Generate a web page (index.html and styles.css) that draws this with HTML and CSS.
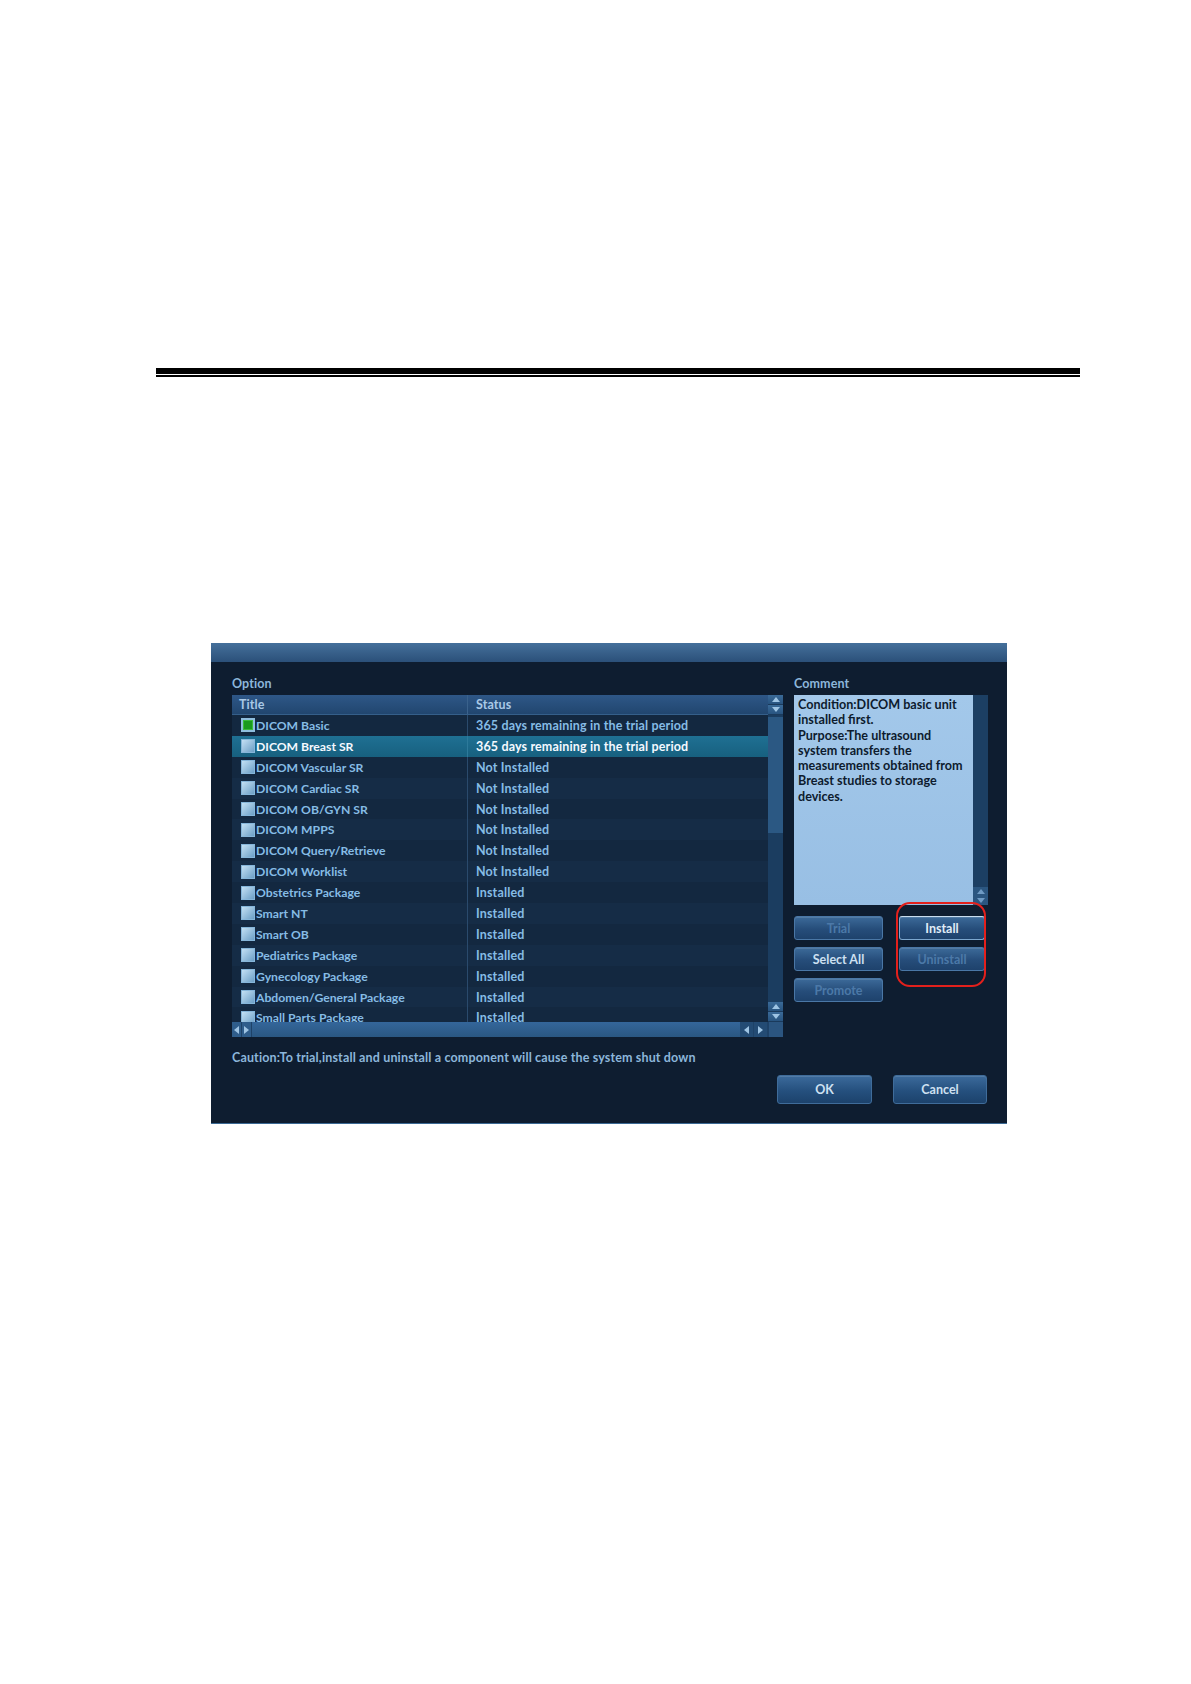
FILE: index.html
```html
<!DOCTYPE html>
<html>
<head>
<meta charset="utf-8">
<link rel="stylesheet" href="styles.css">
</head>
<body>
<div class="page">
  <div class="rule"><div class="rule-thick"></div><div class="rule-thin"></div></div>
  <div class="dialog">
    <div class="titlebar"></div>
    <div class="dlg-body">
      <div class="main">
        <div class="left">
          <div class="label">Option</div>
          <div class="table">
            <div class="table-main">
              <div class="grid">
                <div class="thead"><div class="c1">Title</div><div class="c2">Status</div></div>
                <div class="rows">
                  <div class="row"><div class="c1"><span class="cb cb-on"></span>DICOM Basic</div><div class="c2">365 days remaining in the trial period</div></div>
                  <div class="row sel"><div class="c1"><span class="cb"></span>DICOM Breast SR</div><div class="c2">365 days remaining in the trial period</div></div>
                  <div class="row"><div class="c1"><span class="cb"></span>DICOM Vascular SR</div><div class="c2">Not Installed</div></div>
                  <div class="row"><div class="c1"><span class="cb"></span>DICOM Cardiac SR</div><div class="c2">Not Installed</div></div>
                  <div class="row"><div class="c1"><span class="cb"></span>DICOM OB/GYN SR</div><div class="c2">Not Installed</div></div>
                  <div class="row"><div class="c1"><span class="cb"></span>DICOM MPPS</div><div class="c2">Not Installed</div></div>
                  <div class="row"><div class="c1"><span class="cb"></span>DICOM Query/Retrieve</div><div class="c2">Not Installed</div></div>
                  <div class="row"><div class="c1"><span class="cb"></span>DICOM Worklist</div><div class="c2">Not Installed</div></div>
                  <div class="row"><div class="c1"><span class="cb"></span>Obstetrics Package</div><div class="c2">Installed</div></div>
                  <div class="row"><div class="c1"><span class="cb"></span>Smart NT</div><div class="c2">Installed</div></div>
                  <div class="row"><div class="c1"><span class="cb"></span>Smart OB</div><div class="c2">Installed</div></div>
                  <div class="row"><div class="c1"><span class="cb"></span>Pediatrics Package</div><div class="c2">Installed</div></div>
                  <div class="row"><div class="c1"><span class="cb"></span>Gynecology Package</div><div class="c2">Installed</div></div>
                  <div class="row"><div class="c1"><span class="cb"></span>Abdomen/General Package</div><div class="c2">Installed</div></div>
                  <div class="row"><div class="c1"><span class="cb"></span>Small Parts Package</div><div class="c2">Installed</div></div>
                </div>
              </div>
              <div class="vscroll">
                <div class="arr"><svg width="8" height="5" viewBox="0 0 8 5"><polygon points="4,0 8,5 0,5" fill="#9ec4e4"/></svg></div>
                <div class="arr"><svg width="8" height="5" viewBox="0 0 8 5"><polygon points="0,0 8,0 4,5" fill="#9ec4e4"/></svg></div>
                <div class="vtrack"><div class="vthumb"></div></div>
                <div class="arr"><svg width="8" height="5" viewBox="0 0 8 5"><polygon points="4,0 8,5 0,5" fill="#9ec4e4"/></svg></div>
                <div class="arr"><svg width="8" height="5" viewBox="0 0 8 5"><polygon points="0,0 8,0 4,5" fill="#9ec4e4"/></svg></div>
              </div>
            </div>
            <div class="hscroll">
              <div class="harr"><svg width="5" height="8" viewBox="0 0 5 8"><polygon points="0,4 5,0 5,8" fill="#9ec4e4"/></svg></div>
              <div class="harr"><svg width="5" height="8" viewBox="0 0 5 8"><polygon points="0,0 5,4 0,8" fill="#9ec4e4"/></svg></div>
              <div class="hthumb"></div>
              <div class="harr dark"><svg width="5" height="8" viewBox="0 0 5 8"><polygon points="0,4 5,0 5,8" fill="#9ec4e4"/></svg></div>
              <div class="harr dark"><svg width="5" height="8" viewBox="0 0 5 8"><polygon points="0,0 5,4 0,8" fill="#9ec4e4"/></svg></div>
              <div class="corner"></div>
            </div>
          </div>
        </div>
        <div class="right">
          <div class="label">Comment</div>
          <div class="comment">
            <div class="comment-text">Condition:DICOM basic unit<br>installed first.<br>Purpose:The ultrasound<br>system transfers the<br>measurements obtained from<br>Breast studies to storage<br>devices.</div>
            <div class="cscroll">
              <div class="ctrack"></div>
              <div class="carr"><svg width="8" height="5" viewBox="0 0 8 5"><polygon points="4,0 8,5 0,5" fill="#6f9bc4"/></svg></div>
              <div class="carr"><svg width="8" height="5" viewBox="0 0 8 5"><polygon points="0,0 8,0 4,5" fill="#6f9bc4"/></svg></div>
            </div>
          </div>
          <div class="btns">
            <button class="btn dis">Trial</button>
            <button class="btn focus">Install</button>
            <button class="btn">Select All</button>
            <button class="btn dis">Uninstall</button>
            <button class="btn dis">Promote</button>
            <div class="redmark"></div>
          </div>
        </div>
      </div>
      <div class="caution">Caution:To trial,install and uninstall a component will cause the system shut down</div>
      <div class="footer">
        <button class="bigbtn ok">OK</button>
        <button class="bigbtn cancel">Cancel</button>
      </div>
    </div>
  </div>
</div>
</body>
</html>
```
FILE: styles.css
```css
html, body {
  margin: 0;
  padding: 0;
  background: #ffffff;
}
.page {
  width: 1191px;
  min-height: 1684px;
  padding-top: 368px;
  box-sizing: border-box;
  font-family: "Lato", "Open Sans", sans-serif;
  font-weight: 700;
}
.rule {
  margin-left: 156px;
  width: 924px;
}
.rule-thick {
  height: 6px;
  background: #000;
  margin-bottom: 1px;
}
.rule-thin {
  height: 2px;
  background: #000;
}
.dialog {
  margin-top: 266px;
  margin-left: 211px;
  width: 796px;
  height: 481px;
  box-sizing: border-box;
  background: #0e1d30;
  border-bottom: 1px solid #3a6994;
}
.titlebar {
  height: 19px;
  background: linear-gradient(#45709b, #2b5079);
}
.dlg-body {
  padding: 14px 20px 0 21px;
}
.main {
  display: flex;
  gap: 11px;
}
.left {
  width: 551px;
}
.label {
  font-size: 12.5px;
  letter-spacing: 0.1px;
  line-height: 16px;
  height: 16px;
  margin-bottom: 3px;
  color: #8cb6da;
}
.table {
  height: 342px;
  display: flex;
  flex-direction: column;
}
.table-main {
  display: flex;
  height: 327px;
}
.grid {
  width: 536px;
  background: #132840;
  display: flex;
  flex-direction: column;
}
.thead {
  height: 20px;
  display: flex;
  background: linear-gradient(#2e5787, #21466f);
  border-bottom: 1px solid #355f8a;
  box-sizing: border-box;
  color: #a9c9e6;
  font-size: 12.5px;
  letter-spacing: 0.1px;
  line-height: 19px;
}
.thead .c1 {
  width: 236px;
  padding-left: 7px;
  box-sizing: border-box;
  border-right: 1px solid #3a628c;
}
.thead .c2 {
  padding-left: 8px;
}
.rows {
  height: 307px;
  overflow: hidden;
}
.row {
  height: 20.9px;
  display: flex;
  align-items: center;
  font-size: 12.5px;
  letter-spacing: 0.15px;
  color: #86bce5;
  white-space: nowrap;
}
.row:nth-child(even) {
  background: #152c46;
}
.row .c1 {
  width: 236px;
  height: 100%;
  padding-left: 9px;
  box-sizing: border-box;
  display: flex;
  align-items: center;
  border-right: 1px solid #2a4a6c;
  font-size: 12.2px;
  letter-spacing: 0;
}
.row .c2 {
  padding-left: 8px;
}
.row.sel {
  background: linear-gradient(#1f7093, #17607f);
  color: #f4f9ff;
}
.row.sel .c1 {
  border-right-color: #2d7a9b;
}
.cb {
  width: 14px;
  height: 14px;
  box-sizing: border-box;
  border: 1px solid #86b6da;
  background: linear-gradient(135deg, #c3e0f4, #6c9fc6);
  margin-right: 1px;
  flex: none;
}
.cb-on {
  background: #1b9a1e;
  border: 2px solid #8fbede;
  box-shadow: inset 0 0 0 1px #3bbb3a;
}
.vscroll {
  width: 15px;
  display: flex;
  flex-direction: column;
  background: #1b3d60;
}
.arr {
  height: 10px;
  display: flex;
  align-items: center;
  justify-content: center;
  background: linear-gradient(#3a6a98, #285480);
  border-bottom: 1px solid #1a3a5c;
  box-sizing: border-box;
}
.vtrack {
  flex: 1;
  padding-top: 2px;
}
.vthumb {
  height: 116px;
  background: #2b5883;
}
.hscroll {
  height: 15px;
  display: flex;
  background: #2a5782;
}
.harr {
  width: 10px;
  display: flex;
  align-items: center;
  justify-content: center;
  background: #2f5d8b;
  border-right: 1px solid #1e4268;
  box-sizing: border-box;
}
.harr.dark {
  width: 14px;
  background: #234b74;
}
.hthumb {
  flex: 1;
  background: linear-gradient(#34669a, #2a5782);
}
.corner {
  width: 15px;
  background: #2b5580;
  border-left: 1px solid #1e4268;
  box-sizing: border-box;
}
.right {
  width: 194px;
}
.comment {
  height: 210px;
  display: flex;
}
.comment-text {
  width: 179px;
  background: linear-gradient(#a3c8ea, #98bfe4);
  color: #0d1b2e;
  font-size: 12.6px;
  line-height: 15.3px;
  padding: 2px 0 0 4px;
  box-sizing: border-box;
  white-space: nowrap;
  overflow: hidden;
}
.cscroll {
  width: 15px;
  display: flex;
  flex-direction: column;
  background: #1c3f63;
}
.ctrack {
  flex: 1;
}
.carr {
  height: 9px;
  display: flex;
  align-items: center;
  justify-content: center;
  background: #2b5680;
}
.btns {
  position: relative;
  margin-top: 11px;
  display: grid;
  grid-template-columns: 89px 86px;
  grid-auto-rows: 24px;
  column-gap: 16px;
  row-gap: 7px;
}
.btn {
  font-family: "Lato", "Open Sans", sans-serif;
  font-weight: 700;
  font-size: 12.5px;
  padding: 0;
  border: 1px solid #4a77a6;
  border-radius: 3px;
  background: linear-gradient(#3c6a99, #264d7a 55%, #1e426c);
  color: #cde0f2;
  box-shadow: inset 0 1px 0 rgba(255,255,255,0.12);
}
.btn.dis {
  color: #4c79a8;
}
.btn.focus {
  border-color: #7ca7cf;
  border-top-color: #c8dcee;
  color: #e0ecf7;
}
.redmark {
  position: absolute;
  left: 102px;
  top: -14px;
  width: 90px;
  height: 85px;
  box-sizing: border-box;
  border: 2px solid #e3201c;
  border-radius: 14px;
}
.caution {
  margin-top: 13px;
  font-size: 12.5px;
  letter-spacing: 0.15px;
  line-height: 16px;
  color: #8cb6da;
  white-space: nowrap;
}
.footer {
  margin-top: 9px;
  display: flex;
  justify-content: flex-end;
  gap: 21px;
}
.bigbtn {
  height: 29px;
  padding: 0;
  font-family: "Lato", "Open Sans", sans-serif;
  font-weight: 700;
  font-size: 12.5px;
  color: #cfe1f2;
  border: 1px solid #3f6c9a;
  border-radius: 3px;
  background: linear-gradient(#3b6a9b, #25507e 55%, #1c426c);
  box-shadow: inset 0 1px 0 rgba(255,255,255,0.12);
}
.bigbtn.ok {
  width: 95px;
}
.bigbtn.cancel {
  width: 94px;
}
```
